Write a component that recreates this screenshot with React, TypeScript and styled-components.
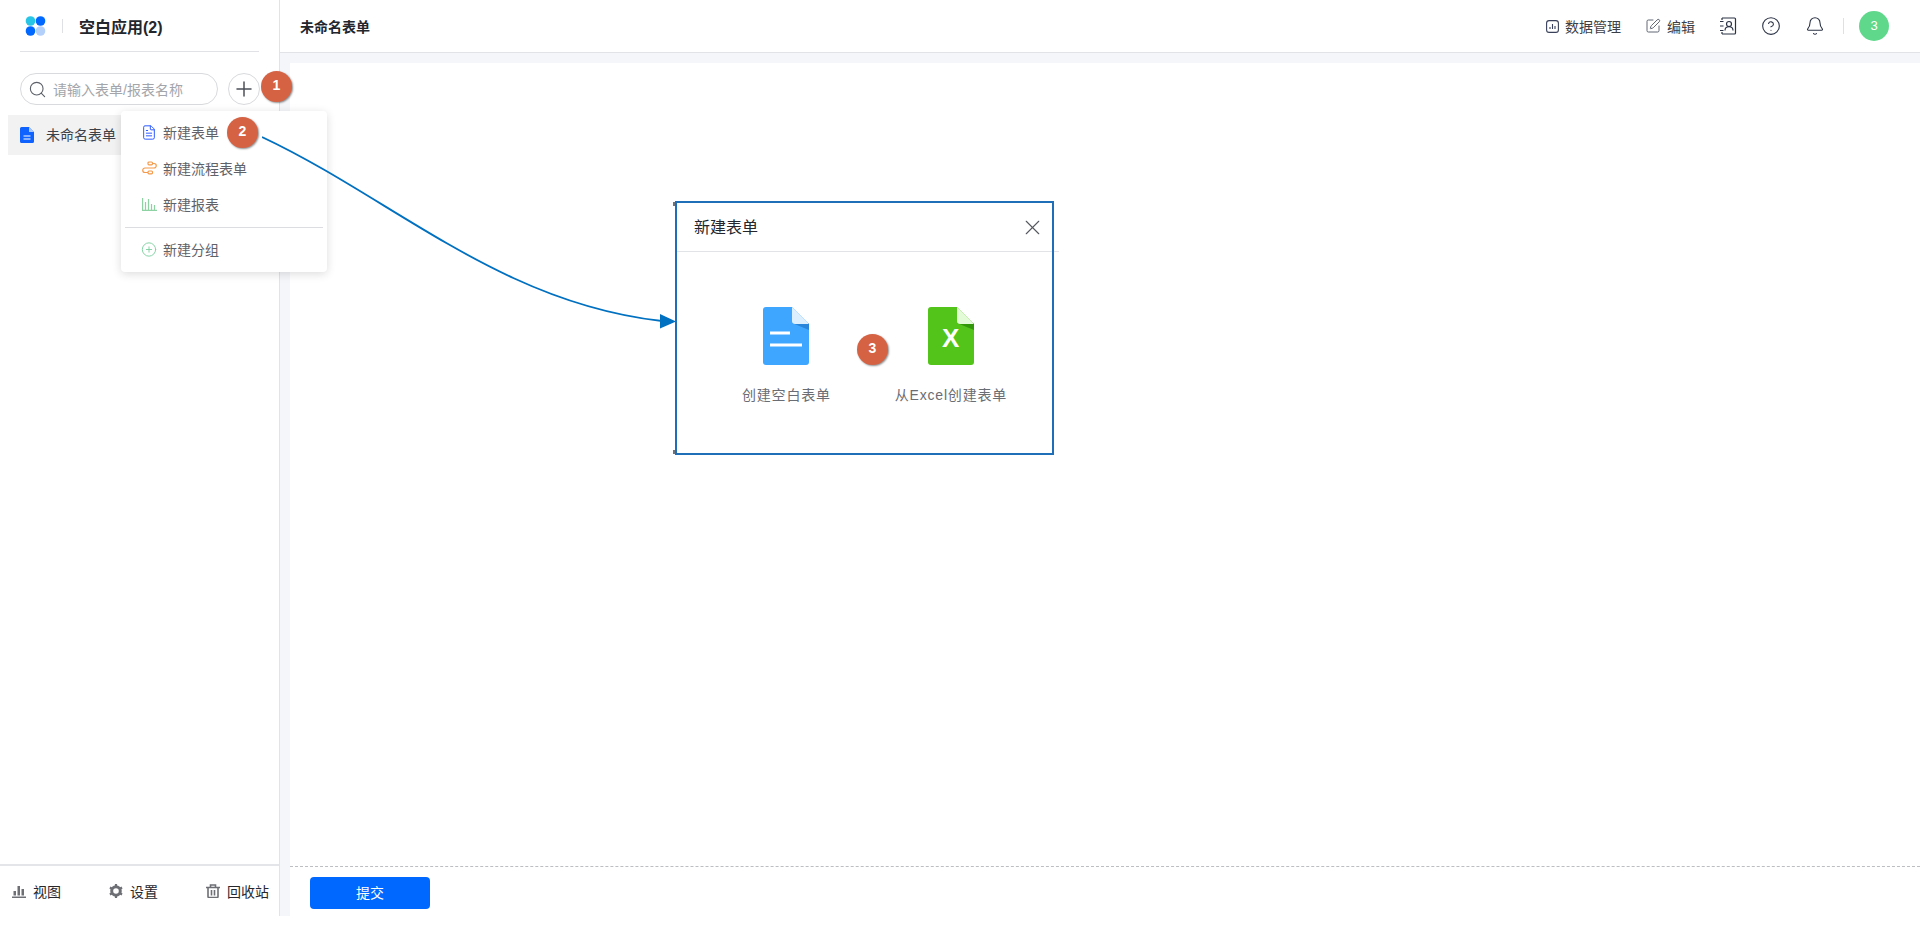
import React from "react";
import styled, { createGlobalStyle } from "styled-components";
import { Search, Plus, X, FileText, CirclePlus, HelpCircle, Bell, SquarePen } from "lucide-react";

const GlobalStyle = createGlobalStyle`
  html, body { margin: 0; padding: 0; background: #fff; }
  body { font-family: "Liberation Sans", "Noto Sans CJK SC", sans-serif; color: #1f2329; }
`;

const menuItems = [
  { label: "新建表单", icon: "form" },
  { label: "新建流程表单", icon: "flow" },
  { label: "新建报表", icon: "chart" },
];

const DocFilled = () => (
  <svg width="14" height="16" viewBox="0 0 14 16">
    <path d="M1.5 0H9l5 5v9.5A1.5 1.5 0 0 1 12.500 16h-11A1.500 1.500 0 0 1 0 14.500v-13A1.500 1.500 0 0 1 1.500 0z" fill="#0f62fe" />
    <path d="M9 0v5h5z" fill="#a9c7ff" />
    <path d="M3.500 9h7M3.500 12h7" stroke="#fff" strokeWidth="1.200" />
  </svg>
);

const Logo = () => (
  <svg width="22" height="20" viewBox="0 0 22 20">
    <circle cx="5.500" cy="5" r="4.800" fill="#29c5e6" />
    <circle cx="15.500" cy="5" r="4.800" fill="#0068ff" />
    <circle cx="5.500" cy="15" r="4.800" fill="#0068ff" />
    <circle cx="15.500" cy="15" r="4.800" fill="#b3d0fb" />
  </svg>
);

const FlowIcon = () => (
  <svg width="15" height="14" viewBox="0 0 15 14" fill="none" stroke="#f59a4a" strokeWidth="1.200">
    <rect x="6" y="1" width="4.500" height="2.800" rx="1" />
    <rect x="6" y="10" width="4.500" height="2.800" rx="1" />
    <path d="M10.500 2.500h1.500a2 2 0 0 1 0 4.500H3a2.200 2.200 0 0 0 0 4.500h3" />
  </svg>
);

const ChartIcon = () => (
  <svg width="15" height="14" viewBox="0 0 15 14" fill="none" stroke="#8ed1a3" strokeWidth="1.200">
    <path d="M.6 1v12.400H15M3.500 13V5M6.500 13V2M9.500 13V7M12.500 13V8" />
  </svg>
);

const ContactIcon = () => (
  <svg width="18" height="18" viewBox="0 0 18 18" fill="none" stroke="#2b3245" strokeWidth="1.200">
    <path d="M3 1h12.500a1 1 0 0 1 1 1v14a1 1 0 0 1-1 1H3" />
    <path d="M1 4.500h3.500M1 9h3.500M1 13.500h3.500M3 1v2M3 15v2" />
    <circle cx="10" cy="7" r="2.500" />
    <path d="M6 13.500c0-5 8-5 8 0" />
  </svg>
);

const DataIcon = () => (
  <svg width="13" height="13" viewBox="0 0 13 13" fill="none" stroke="#39405a" strokeWidth="1.100">
    <rect x=".6" y=".6" width="11.800" height="11.800" rx="2.500" />
    <path d="M4 9V7M6.500 9V4M9 9V6" />
  </svg>
);

const BigFile = ({ body, corner, fold, children }: { body: string; corner: string; fold: string; children: React.ReactNode }) => (
  <svg width="46" height="58" viewBox="0 0 46 58">
    <path d="M3 0h26l17 17v38a3 3 0 0 1-3 3H3a3 3 0 0 1-3-3V3a3 3 0 0 1 3-3z" fill={body} />
    <path d="M29 16h17v7z" fill={fold} opacity=".6" />
    <path d="M29 0l17 17H32a3 3 0 0 1-3-3z" fill={corner} />
    {children}
  </svg>
);

const BarsIcon = () => (
  <svg width="14" height="13" viewBox="0 0 14 13" fill="#6d6f75">
    <rect x="0" y="11.500" width="14" height="1.500" />
    <rect x="1.500" y="6" width="2.500" height="4.500" />
    <rect x="5.500" y="1" width="2.500" height="9.500" />
    <rect x="9.500" y="4" width="2.500" height="6.500" />
  </svg>
);

const GearIcon = () => (
  <svg width="14" height="14" viewBox="0 0 14 14">
    <circle cx="7" cy="7" r="4.300" fill="none" stroke="#6d6f75" strokeWidth="3" />
    <path d="M7 0v14M.9 3.500l12.200 7M.9 10.500l12.200-7" stroke="#6d6f75" strokeWidth="2.200" strokeDasharray="2.400 9.200" />
  </svg>
);

const TrashIcon = () => (
  <svg width="14" height="14" viewBox="0 0 14 14" fill="none" stroke="#6d6f75" strokeWidth="1.600">
    <path d="M0 3.500h14M4.500 3V1h5v2M2 4v8.500a1 1 0 0 0 1 1h8a1 1 0 0 0 1-1V4M5.500 6v5.500M8.500 6v5.500" />
  </svg>
);

const App = () => (
  <>
    <GlobalStyle />
    <Page>
      <Sidebar>
        <Brand>
          <Logo />
          <BrandRule />
          <BrandName>空白应用(2)</BrandName>
        </Brand>
        <SearchRow>
          <SearchBox>
            <Search size={19} color="#5c6068" strokeWidth={1.400} />
            <span>请输入表单/报表名称</span>
          </SearchBox>
          <AddButton>
            <Plus size={24} color="#4b4f58" strokeWidth={1.500} />
          </AddButton>
        </SearchRow>
        <FormItem>
          <DocFilled />
          <FormItemLabel>未命名表单</FormItemLabel>
        </FormItem>
        <SideFooter>
          <FooterLink><BarsIcon />视图</FooterLink>
          <FooterLink><GearIcon />设置</FooterLink>
          <FooterLink><TrashIcon />回收站</FooterLink>
        </SideFooter>
      </Sidebar>
      <Main>
        <TopBar>
          <PageTitle>未命名表单</PageTitle>
          <TopActions>
            <TopAction><DataIcon />数据管理</TopAction>
            <TopAction><SquarePen size={16} color="#555b6b" strokeWidth={1.400} />编辑</TopAction>
            <ContactIcon />
            <HelpCircle size={20} color="#2b3245" strokeWidth={1.300} />
            <Bell size={20} color="#2b3245" strokeWidth={1.300} />
            <TopRule />
            <Avatar>3</Avatar>
          </TopActions>
        </TopBar>
        <Canvas>
          <CanvasBody />
          <CanvasFooter>
            <SubmitButton>提交</SubmitButton>
          </CanvasFooter>
        </Canvas>
      </Main>

      <AddMenu>
        {menuItems.map((item) => (
          <MenuItem key={item.label}>
            <MenuIcon>
              {item.icon === "form" && <FileText size={17} color="#2f5cff" strokeWidth={1.500} />}
              {item.icon === "flow" && <FlowIcon />}
              {item.icon === "chart" && <ChartIcon />}
            </MenuIcon>
            {item.label}
          </MenuItem>
        ))}
        <MenuRule />
        <MenuItem>
          <MenuIcon>
            <CirclePlus size={17} color="#7fd0a0" strokeWidth={1.400} />
          </MenuIcon>
          新建分组
        </MenuItem>
      </AddMenu>

      <Arrow width="420" height="200" viewBox="0 0 420 200">
        <path d="M0 1C130 62 238 167 400 185" fill="none" stroke="#0070c0" strokeWidth="1.800" />
        <path d="M398 178l16 7.500-16 7z" fill="#0070c0" />
      </Arrow>

      <Dialog>
        <Handle $edge="top" />
        <Handle $edge="bottom" />
        <DialogHead>
          <DialogTitle>新建表单</DialogTitle>
          <X size={25} color="#55585f" strokeWidth={1.100} />
        </DialogHead>
        <DialogBody>
          <CreateOption>
            <BigFile body="#3fa6ff" corner="#dcefff" fold="#1b6fc0">
              <path d="M7 26h20M7 38h32" stroke="#fff" strokeWidth="3" />
            </BigFile>
            <span>创建空白表单</span>
          </CreateOption>
          <CreateOption>
            <BigFile body="#52c41a" corner="#e4fbd8" fold="#1f7a00">
              <text x="23" y="40" textAnchor="middle" fill="#fff" fontSize="26" fontWeight="700" fontFamily="Liberation Sans, sans-serif">X</text>
            </BigFile>
            <span>从Excel创建表单</span>
          </CreateOption>
        </DialogBody>
      </Dialog>

      <Badge $x={261} $y={71}>1</Badge>
      <Badge $x={227} $y={117}>2</Badge>
      <Badge $x={857} $y={334}>3</Badge>
    </Page>
  </>
);

export default App;

const Page = styled.div`
  position: relative;
  display: flex;
  width: 1920px;
  height: 916px;
  background: #fff;
`;

const Sidebar = styled.aside`
  width: 279px;
  flex: none;
  display: flex;
  flex-direction: column;
  border-right: 1px solid #e2e3e6;
`;

const Brand = styled.div`
  display: flex;
  align-items: center;
  height: 51px;
  margin: 0 20px;
  padding-left: 5px;
  border-bottom: 1px solid #e1e2e5;
`;

const BrandRule = styled.i`
  width: 1px;
  height: 14px;
  margin: 0 16px 0 15px;
  background: #dfe0e3;
`;

const BrandName = styled.div`
  font-size: 16px;
  font-weight: 700;
  color: #23262d;
`;

const SearchRow = styled.div`
  display: flex;
  align-items: center;
  gap: 10px;
  margin: 21px 19px 0 20px;
`;

const SearchBox = styled.div`
  flex: none;
  width: 198px;
  height: 32px;
  box-sizing: border-box;
  display: flex;
  align-items: center;
  gap: 6px;
  padding-left: 7px;
  border: 1px solid #d9dadd;
  border-radius: 16px;
  font-size: 14px;
  color: #a3a5aa;
`;

const AddButton = styled.div`
  width: 32px;
  height: 32px;
  box-sizing: border-box;
  display: flex;
  align-items: center;
  justify-content: center;
  border: 1px solid #d9dadd;
  border-radius: 50%;
`;

const FormItem = styled.div`
  display: flex;
  align-items: center;
  gap: 12px;
  height: 40px;
  margin: 10px 8px 0;
  padding-left: 12px;
  background: #f2f2f3;
  font-size: 14px;
  color: #3d4047;
`;

const FormItemLabel = styled.span`
  margin-bottom: 2px;
`;

const SideFooter = styled.div`
  margin-top: auto;
  height: 50px;
  display: flex;
  align-items: center;
  justify-content: space-between;
  padding: 0 10px 0 12px;
  border-top: 2px solid #e4e5e8;
`;

const FooterLink = styled.div`
  display: flex;
  align-items: center;
  gap: 7px;
  font-size: 14px;
  color: #26282e;
`;

const Main = styled.main`
  flex: 1;
  min-width: 0;
  display: flex;
  flex-direction: column;
`;

const TopBar = styled.header`
  height: 52px;
  flex: none;
  display: flex;
  align-items: center;
  justify-content: space-between;
  padding: 0 31px 0 20px;
  border-bottom: 1px solid #e2e3e6;
`;

const PageTitle = styled.div`
  font-size: 14px;
  font-weight: 700;
  color: #23262d;
`;

const TopActions = styled.div`
  display: flex;
  align-items: center;
  gap: 24px;
`;

const TopAction = styled.div`
  display: flex;
  align-items: center;
  gap: 6px;
  font-size: 14px;
  color: #3c3f46;
`;

const TopRule = styled.i`
  width: 1px;
  height: 16px;
  margin-left: -6px;
  background: #dfe0e3;
`;

const Avatar = styled.div`
  width: 30px;
  height: 30px;
  margin-left: -9px;
  border-radius: 50%;
  background: #5fd88c;
  color: #fff;
  font-size: 13px;
  line-height: 30px;
  text-align: center;
`;

const Canvas = styled.div`
  flex: 1;
  min-height: 0;
  display: flex;
  flex-direction: column;
  padding: 10px 0 0 10px;
  background: #f5f6fa;
`;

const CanvasBody = styled.div`
  flex: 1;
  background: #fff;
`;

const CanvasFooter = styled.div`
  height: 39px;
  flex: none;
  padding: 10px 0 0 20px;
  background: #fff;
  border-top: 1px dashed #bdbec2;
`;

const SubmitButton = styled.div`
  width: 120px;
  height: 32px;
  border-radius: 4px;
  background: #0068ff;
  color: #fff;
  font-size: 14px;
  line-height: 32px;
  text-align: center;
`;

const AddMenu = styled.div`
  position: absolute;
  left: 121px;
  top: 111px;
  width: 206px;
  height: 161px;
  box-sizing: border-box;
  padding: 3px 4px;
  background: #fff;
  border-radius: 4px;
  box-shadow: 0 2px 10px rgba(0, 0, 0, 0.14);
`;

const MenuItem = styled.div`
  display: flex;
  align-items: center;
  gap: 6px;
  height: 36px;
  padding-left: 16px;
  font-size: 14px;
  color: #5f6268;
`;

const MenuIcon = styled.span`
  width: 16px;
  display: flex;
  justify-content: center;
`;

const MenuRule = styled.div`
  height: 1px;
  margin: 5px 0 3px;
  background: #dcdde0;
`;

const Arrow = styled.svg`
  position: absolute;
  left: 262px;
  top: 136px;
`;

const Dialog = styled.div`
  position: absolute;
  left: 675px;
  top: 201px;
  width: 379px;
  height: 254px;
  box-sizing: border-box;
  border: 2px solid #1f6fb8;
  background: #fff;

  &::after {
    content: "";
    position: absolute;
    left: 100%;
    top: 48px;
    width: 5px;
    margin-left: 2px;
    height: 1px;
    background: #e2e3e6;
  }
`;

const Handle = styled.i<{ $edge: "top" | "bottom" }>`
  position: absolute;
  left: -4px;
  ${(p) => p.$edge}: -1px;
  width: 2px;
  height: 4px;
  background: #6f7278;
`;

const DialogHead = styled.div`
  height: 48px;
  display: flex;
  align-items: center;
  justify-content: space-between;
  padding: 0 7px 0 17px;
  border-bottom: 1px solid #e2e3e6;
`;

const DialogTitle = styled.span`
  margin-bottom: 2px;
  font-size: 16px;
  color: #23262d;
`;

const DialogBody = styled.div`
  display: flex;
  padding: 55px 0 0 65px;
  gap: 64px;
`;

const CreateOption = styled.div`
  display: flex;
  flex-direction: column;
  align-items: center;
  gap: 19px;
  font-size: 14px;
  letter-spacing: 0.8px;
  color: #6a6d73;
`;

const Badge = styled.div<{ $x: number; $y: number }>`
  position: absolute;
  left: ${(p) => p.$x}px;
  top: ${(p) => p.$y}px;
  width: 31px;
  height: 31px;
  border-radius: 50%;
  background: #d66244;
  color: #fff;
  font-size: 14px;
  font-weight: 700;
  line-height: 29px;
  text-align: center;
  box-shadow: 1px 1px 2px rgba(0, 0, 0, 0.45);
`;
